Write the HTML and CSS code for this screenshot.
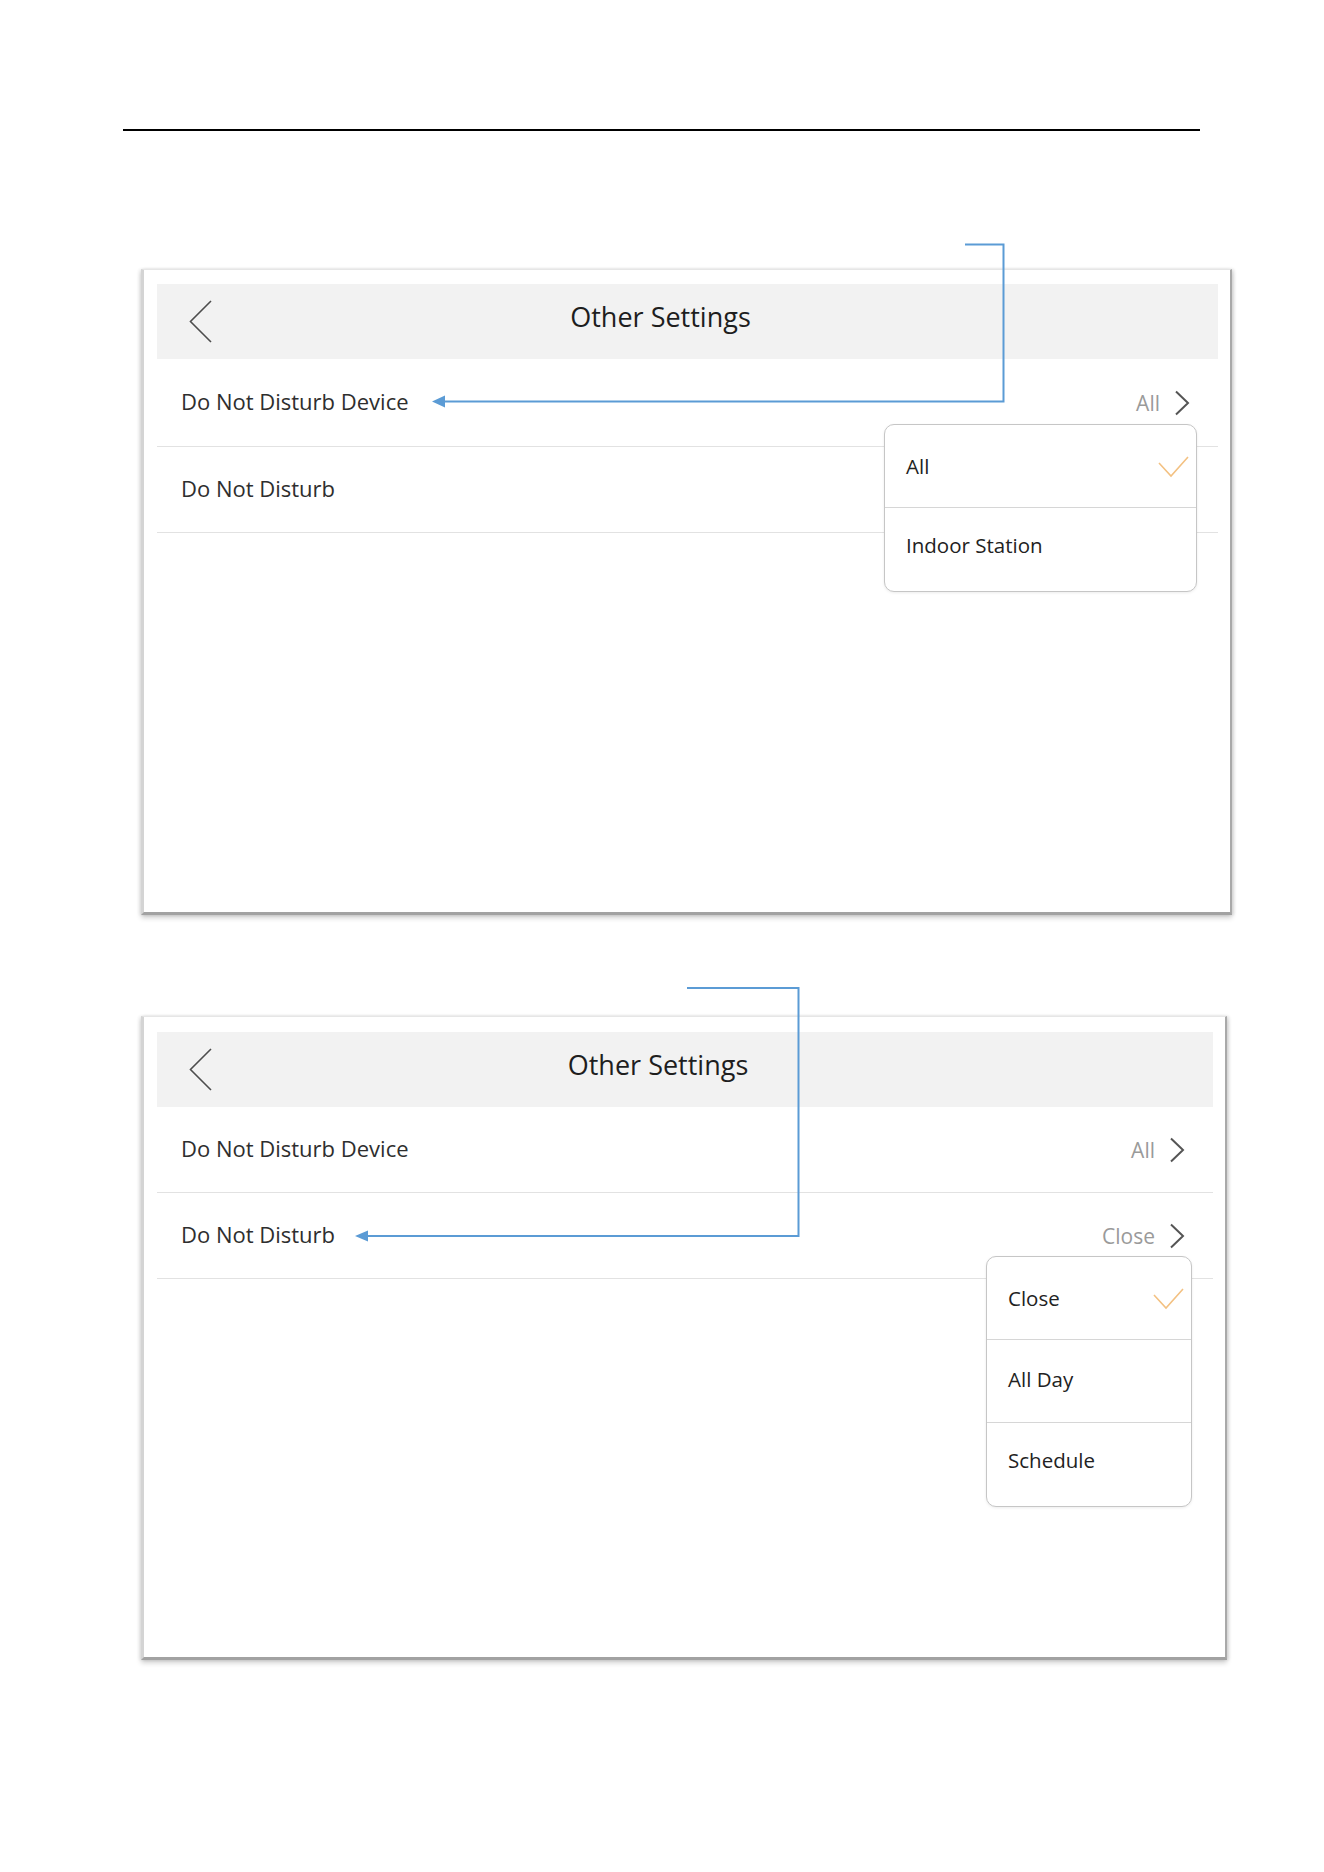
FILE: index.html
```html
<!DOCTYPE html>
<html lang="en">
<head>
  <meta charset="UTF-8">
  <title>Other Settings</title>
  <link rel="stylesheet" href="styles.css">
</head>
<body>

<div class="page">
  <div class="rule"></div>

  <!-- screen 1: Do Not Disturb Device -->
  <div class="shot shot-a">
    <div class="bar">
      <svg class="back" width="24" height="44" viewBox="0 0 24 44"><polyline points="22,1 1.5,21.5 22,42"/></svg>
      <span class="title">Other Settings</span>
    </div>
    <div class="row">
      <span class="label">Do Not Disturb Device</span>
      <span class="value">All</span>
      <svg class="chev" width="16" height="26" viewBox="0 0 16 26"><polyline points="2,1.5 14,13 2,24.5"/></svg>
      <div class="menu menu-a">
        <div class="menu-item">All
          <svg class="check" width="33" height="23" viewBox="0 0 33 23"><polyline points="2,8 14,21 31,2"/></svg>
        </div>
        <div class="menu-item">Indoor Station</div>
      </div>
    </div>
    <div class="row">
      <span class="label">Do Not Disturb</span>
    </div>
  </div>

  <!-- screen 2: Do Not Disturb -->
  <div class="shot shot-b">
    <div class="bar">
      <svg class="back" width="24" height="44" viewBox="0 0 24 44"><polyline points="22,1 1.5,21.5 22,42"/></svg>
      <span class="title">Other Settings</span>
    </div>
    <div class="row">
      <span class="label">Do Not Disturb Device</span>
      <span class="value">All</span>
      <svg class="chev" width="16" height="26" viewBox="0 0 16 26"><polyline points="2,1.5 14,13 2,24.5"/></svg>
    </div>
    <div class="row">
      <span class="label">Do Not Disturb</span>
      <span class="value">Close</span>
      <svg class="chev" width="16" height="26" viewBox="0 0 16 26"><polyline points="2,1.5 14,13 2,24.5"/></svg>
      <div class="menu menu-b">
        <div class="menu-item">Close
          <svg class="check" width="33" height="23" viewBox="0 0 33 23"><polyline points="2,8 14,21 31,2"/></svg>
        </div>
        <div class="menu-item">All Day</div>
        <div class="menu-item">Schedule</div>
      </div>
    </div>
  </div>

  <!-- callout lines drawn over both screens -->
  <svg class="callouts" width="1324" height="1872" viewBox="0 0 1324 1872">
    <polyline points="965,244.5 1003.5,244.5 1003.5,401.5 443,401.5"/>
    <polygon points="432,401.5 445,395.5 445,407.5"/>
    <polyline points="687,988 798.5,988 798.5,1236 367,1236"/>
    <polygon points="355,1236 368,1230.5 368,1241.5"/>
  </svg>
</div>

</body>
</html>
```

FILE: styles.css
```css
body {
  margin: 0;
  background-color: #fff;
  font-family: "Open Sans", "Noto Sans", sans-serif;
  color: #2e2e2e;
}

.page {
  position: relative;
  width: 1324px;
  padding-top: 129px;
  padding-bottom: 100px;
}

.rule {
  margin-left: 123px;
  width: 1077px;
  height: 2px;
  background-color: #000;
}

/* screenshot frames */
.shot {
  box-sizing: border-box;
  margin-left: 141px;
  padding: 14px 12px 0 13px;
  background-color: #fff;
  border-top: 1px solid #e6e6e6;
  border-left: 3px solid #d4d4d4;
  border-right: 2px solid #a9a9a9;
  border-bottom: 3px solid #a2a2a2;
  box-shadow: 0 3px 5px rgba(0, 0, 0, 0.18), 2px 0 3px rgba(0, 0, 0, 0.1), -2px 0 3px rgba(0, 0, 0, 0.06);
}

.shot-a {
  margin-top: 138px;
  width: 1091px;
  height: 646px;
}

.shot-b {
  margin-top: 101px;
  width: 1086px;
  height: 644px;
  padding-top: 15px;
}

.bar {
  box-sizing: border-box;
  height: 75px;
  display: flex;
  align-items: center;
  padding: 0 110px 10px 32px;
  background-color: #f2f2f2;
}

.back {
  flex: none;
  margin-top: 10px;
}

.back polyline {
  fill: none;
  stroke: #4d4d4d;
  stroke-width: 1.6;
}

.title {
  flex: 1;
  text-align: center;
  font-size: 27px;
  color: #1e1e1e;
}

.row {
  position: relative;
  box-sizing: border-box;
  height: 86px;
  display: flex;
  align-items: center;
  padding: 0 28px 4px 24px;
  border-bottom: 1px solid #e2e2e2;
}

.shot-a .bar + .row {
  height: 88px;
}

.label {
  flex: 1;
  font-size: 22px;
}

.value {
  font-size: 21px;
  color: #9a9a9a;
  margin-right: 14px;
  margin-top: 4px;
}

.chev {
  margin-top: 4px;
}

.chev polyline {
  fill: none;
  stroke: #555;
  stroke-width: 2;
}

/* dropdown menus */
.menu {
  position: absolute;
  right: 21px;
  z-index: 2;
  background-color: #fff;
  border: 1.5px solid #c6c6c6;
  border-radius: 10px;
  box-shadow: 0 1px 3px rgba(0, 0, 0, 0.08);
}

.menu-a {
  top: 65px;
  width: 311px;
}

.menu-b {
  top: 63px;
  width: 204px;
}

.menu-item {
  box-sizing: border-box;
  height: 83px;
  display: flex;
  align-items: center;
  justify-content: space-between;
  padding: 0 6px 0 21px;
  font-size: 20.5px;
  color: #222;
  border-bottom: 1px solid #d6d6d6;
}

.menu-item + .menu-item {
  padding-bottom: 4px;
}

.menu-item:last-child {
  border-bottom: none;
  padding-bottom: 10px;
}

.check polyline {
  fill: none;
  stroke: #f3c182;
  stroke-width: 1.6;
}

.callouts {
  position: absolute;
  top: 0;
  left: 0;
  pointer-events: none;
  z-index: 5;
}

.callouts polyline {
  fill: none;
  stroke: #5b9bd5;
  stroke-width: 2;
}

.callouts polygon {
  fill: #5b9bd5;
}
```
